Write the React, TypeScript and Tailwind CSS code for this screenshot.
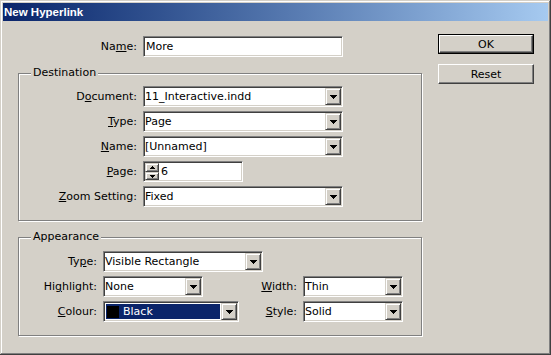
import React from 'react';

const sunken =
  'border border-t-[#808080] border-l-[#808080] border-b-white border-r-white shadow-[inset_1px_1px_0_#404040,inset_-1px_-1px_0_#d4d0c8]';
const raisedSmall =
  'border border-t-[#d4d0c8] border-l-[#d4d0c8] border-b-[#404040] border-r-[#404040] shadow-[inset_1px_1px_0_#fff,inset_-1px_-1px_0_#808080] bg-[#d4d0c8]';
const raisedButton =
  'border border-t-white border-l-white border-b-[#404040] border-r-[#404040] shadow-[inset_-1px_-1px_0_#808080] bg-[#d4d0c8]';

function Arrow({ up, small }: { up?: boolean; small?: boolean }) {
  if (small) {
    return (
      <svg width="5" height="3" viewBox="0 0 5 3" shapeRendering="crispEdges">
        <path d={up ? 'M2 0h1v1h1v1h1v1H0V2h1V1h1z' : 'M0 0h5v1H4v1H3v1H2V2H1V1H0z'} fill="#000" />
      </svg>
    );
  }
  return (
    <svg width="7" height="4" viewBox="0 0 7 4" shapeRendering="crispEdges">
      <path d="M0 0h7v1H6v1H5v1H4v1H3V3H2V2H1V1H0z" fill="#000" />
    </svg>
  );
}

// label with one underlined access key
function Label({ pre, key_, post, className }: { pre: string; key_: string; post: string; className: string }) {
  return (
    <div className={`${className} text-right mr-[6px] whitespace-nowrap`}>
      {pre}
      <span className="underline underline-offset-1">{key_}</span>
      {post}
    </div>
  );
}

function Select({ className, children }: { className: string; children: React.ReactNode }) {
  return (
    <div className={`${sunken} ${className} h-[21px] p-[1px] flex bg-white`}>
      <div className="flex-1 flex items-center min-w-0 whitespace-nowrap">{children}</div>
      <div className={`${raisedSmall} w-[16px] h-full flex items-center justify-center`}>
        <Arrow />
      </div>
    </div>
  );
}

function GroupBox({ title, className, children }: { title: string; className: string; children: React.ReactNode }) {
  return (
    <div className={`relative border border-[#808080] shadow-[inset_1px_1px_0_#fff,1px_1px_0_#fff] ${className}`}>
      <div className="absolute -top-[8px] left-[12px] px-[2px] bg-[#d4d0c8]">{title}</div>
      {children}
    </div>
  );
}

export default function App() {
  return (
    <div className="w-[551px] h-[355px] bg-[#d4d0c8] p-[3px] font-['DejaVu_Sans',sans-serif] text-[11px] leading-[13px] text-black shadow-[inset_-1px_-1px_0_#404040,inset_1px_1px_0_#d4d0c8,inset_-2px_-2px_0_#808080,inset_2px_2px_0_#fff]">
      <div className="h-[18px] flex items-center pl-[1px] bg-linear-to-r from-[#0a246a] to-[#a6caf0] text-white font-bold font-['Liberation_Sans',sans-serif] text-[11.5px]">
        New Hyperlink
      </div>

      <div className="flex pl-[15px] pt-[15px]">
        <div className="w-[404px]">
          <div className="flex items-center h-[21px]">
            <Label pre="Na" key_="m" post="e:" className="w-[119px]" />
            <div className={`${sunken} w-[200px] h-[21px] bg-white flex items-center pl-[2px]`}>More</div>
          </div>

          <GroupBox title="Destination" className="mt-[16px] h-[148px] pt-[12px] flex flex-col gap-[4px]">
            <div className="flex items-center">
              <Label pre="D" key_="o" post="cument:" className="w-[118px]" />
              <Select className="w-[200px]">11_Interactive.indd</Select>
            </div>
            <div className="flex items-center">
              <Label pre="" key_="T" post="ype:" className="w-[118px]" />
              <Select className="w-[200px]">Page</Select>
            </div>
            <div className="flex items-center">
              <Label pre="" key_="N" post="ame:" className="w-[118px]" />
              <Select className="w-[200px]">[Unnamed]</Select>
            </div>
            <div className="flex items-center">
              <Label pre="" key_="P" post="age:" className="w-[118px]" />
              <div className={`${sunken} w-[100px] h-[21px] p-[1px] flex bg-white`}>
                <div className="w-[14px] flex flex-col">
                  <div className={`${raisedSmall} h-[9px] flex items-center justify-center`}>
                    <Arrow up small />
                  </div>
                  <div className={`${raisedSmall} h-[8px] flex items-center justify-center`}>
                    <Arrow small />
                  </div>
                </div>
                <div className="flex items-center pl-[2px]">6</div>
              </div>
            </div>
            <div className="flex items-center">
              <Label pre="" key_="Z" post="oom Setting:" className="w-[118px]" />
              <Select className="w-[200px]">Fixed</Select>
            </div>
          </GroupBox>

          <GroupBox title="Appearance" className="mt-[16px] h-[99px] pt-[13px] flex flex-col gap-[4px]">
            <div className="flex items-center">
              <Label pre="Ty" key_="p" post="e:" className="w-[78px]" />
              <Select className="w-[160px]">Visible Rectangle</Select>
            </div>
            <div className="flex items-center">
              <div className="w-[224px] flex items-center">
                <Label pre="Hi" key_="g" post="hlight:" className="w-[78px]" />
                <Select className="w-[100px]">None</Select>
              </div>
              <Label pre="" key_="W" post="idth:" className="w-[54px]" />
              <Select className="w-[100px]">Thin</Select>
            </div>
            <div className="flex items-center">
              <div className="w-[224px] flex items-center">
                <Label pre="" key_="C" post="olour:" className="w-[78px]" />
                <Select className="w-[136px]">
                  <div className="m-[1px] self-stretch flex-1 flex items-center bg-[#0a246a] text-white">
                    <div className="w-[12px] h-[12px] bg-black ml-[1px] mr-[4px]" />
                    Black
                  </div>
                </Select>
              </div>
              <Label pre="" key_="S" post="tyle:" className="w-[54px]" />
              <Select className="w-[100px]">Solid</Select>
            </div>
          </GroupBox>
        </div>

        <div className="ml-[16px] -mt-[2px] flex flex-col gap-[10px]">
          <div className="w-[96px] h-[20px] border border-black flex">
            <div className={`${raisedButton} flex-1 flex items-center justify-center`}>OK</div>
          </div>
          <div className={`${raisedButton} w-[96px] h-[20px] flex items-center justify-center`}>Reset</div>
        </div>
      </div>
    </div>
  );
}
